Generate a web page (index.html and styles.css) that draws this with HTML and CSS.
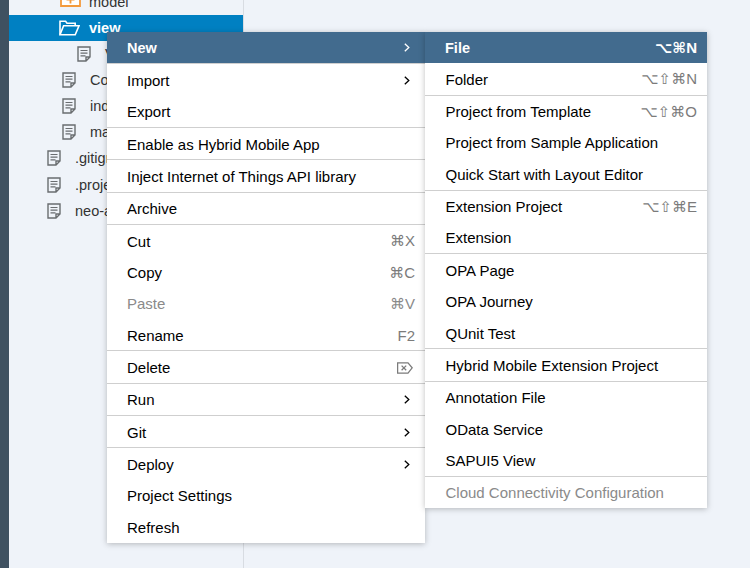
FILE: index.html
```html
<!DOCTYPE html>
<html lang="en">
<head>
    <meta charset="UTF-8">
    <meta name="viewport" content="width=device-width, initial-scale=1.0">
    <title>Workspace context menu</title>
    <link rel="stylesheet" href="styles.css">
</head>
<body>
    <svg class="icon-defs" width="0" height="0" aria-hidden="true">
        <symbol id="file-icon" viewBox="0 0 14 16">
            <path d="M1 1h12v10l-4 4H1z M13 11H9v4" fill="none" stroke="currentColor" stroke-width="1.4"/>
            <path d="M3.5 4.5h7M3.5 7.2h7M3.5 9.9h5" fill="none" stroke="currentColor" stroke-width="1.2"/>
        </symbol>
        <symbol id="chevron" viewBox="0 0 6 9">
            <path d="M.8.8 4.8 4.5.8 8.2" fill="none" stroke="currentColor" stroke-width="1.3"/>
        </symbol>
    </svg>

    <div class="app">
        <div class="rail"></div>

        <aside class="tree">
            <div class="tree-row indent-2 model-row">
                <svg class="folder-icon model" viewBox="0 0 21 14">
                    <path d="M1 1h19v12H1z" fill="#fff" stroke="#f39a3c" stroke-width="1.8"/>
                    <path d="M10.5 2.5v8M6.5 6.5h8" stroke="#f39a3c" stroke-width="1.8"/>
                </svg>
                <span>model</span>
            </div>
            <div class="tree-row indent-2 selected">
                <svg class="folder-icon" viewBox="0 0 21 16">
                    <path d="M1 14.8V1.2h5.6l1.4 2h8.2v2.6" fill="none" stroke="#fff" stroke-width="1.6"/>
                    <path d="M1 14.8 4.6 5.8H20l-3.8 9z" fill="none" stroke="#fff" stroke-width="1.6"/>
                </svg>
                <span>view</span>
            </div>
            <div class="tree-row indent-3">
                <svg class="file-icon"><use href="#file-icon"/></svg>
                <span>View1.view.xml</span>
            </div>
            <div class="tree-row indent-2">
                <svg class="file-icon"><use href="#file-icon"/></svg>
                <span>Component.js</span>
            </div>
            <div class="tree-row indent-2">
                <svg class="file-icon"><use href="#file-icon"/></svg>
                <span>index.html</span>
            </div>
            <div class="tree-row indent-2">
                <svg class="file-icon"><use href="#file-icon"/></svg>
                <span>manifest.json</span>
            </div>
            <div class="tree-row indent-1">
                <svg class="file-icon"><use href="#file-icon"/></svg>
                <span>.gitignore</span>
            </div>
            <div class="tree-row indent-1">
                <svg class="file-icon"><use href="#file-icon"/></svg>
                <span>.project.json</span>
            </div>
            <div class="tree-row indent-1">
                <svg class="file-icon"><use href="#file-icon"/></svg>
                <span>neo-app.json</span>
            </div>
        </aside>
    </div>

    <div class="menu main-menu">
        <div class="menu-item active"><span>New</span><svg class="arrow"><use href="#chevron"/></svg></div>
        <div class="menu-group">
            <div class="menu-item"><span>Import</span><svg class="arrow"><use href="#chevron"/></svg></div>
            <div class="menu-item"><span>Export</span></div>
        </div>
        <div class="menu-group">
            <div class="menu-item"><span>Enable as Hybrid Mobile App</span></div>
        </div>
        <div class="menu-group">
            <div class="menu-item"><span>Inject Internet of Things API library</span></div>
        </div>
        <div class="menu-group">
            <div class="menu-item"><span>Archive</span></div>
        </div>
        <div class="menu-group">
            <div class="menu-item"><span>Cut</span><span class="shortcut">&#8984;X</span></div>
            <div class="menu-item"><span>Copy</span><span class="shortcut">&#8984;C</span></div>
            <div class="menu-item disabled"><span>Paste</span><span class="shortcut">&#8984;V</span></div>
            <div class="menu-item"><span>Rename</span><span class="shortcut">F2</span></div>
        </div>
        <div class="menu-group">
            <div class="menu-item">
                <span>Delete</span>
                <svg class="delete-key" viewBox="0 0 16 12">
                    <path d="M.6.8h10.4l4.2 5-4.2 5.4H.6z" fill="none" stroke="#7b7b7b" stroke-width="1.3"/>
                    <path d="M4.6 3.6l4.6 4.6M9.2 3.6 4.6 8.2" fill="none" stroke="#7b7b7b" stroke-width="1.3"/>
                </svg>
            </div>
        </div>
        <div class="menu-group">
            <div class="menu-item"><span>Run</span><svg class="arrow"><use href="#chevron"/></svg></div>
        </div>
        <div class="menu-group">
            <div class="menu-item"><span>Git</span><svg class="arrow"><use href="#chevron"/></svg></div>
        </div>
        <div class="menu-group">
            <div class="menu-item"><span>Deploy</span><svg class="arrow"><use href="#chevron"/></svg></div>
            <div class="menu-item"><span>Project Settings</span></div>
            <div class="menu-item"><span>Refresh</span></div>
        </div>
    </div>

    <div class="menu sub-menu">
        <div class="menu-item active"><span>File</span><span class="shortcut">&#8997;&#8984;N</span></div>
        <div class="menu-item"><span>Folder</span><span class="shortcut">&#8997;&#8679;&#8984;N</span></div>
        <div class="menu-group">
            <div class="menu-item"><span>Project from Template</span><span class="shortcut">&#8997;&#8679;&#8984;O</span></div>
            <div class="menu-item"><span>Project from Sample Application</span></div>
            <div class="menu-item"><span>Quick Start with Layout Editor</span></div>
        </div>
        <div class="menu-group">
            <div class="menu-item"><span>Extension Project</span><span class="shortcut">&#8997;&#8679;&#8984;E</span></div>
            <div class="menu-item"><span>Extension</span></div>
        </div>
        <div class="menu-group">
            <div class="menu-item"><span>OPA Page</span></div>
            <div class="menu-item"><span>OPA Journey</span></div>
            <div class="menu-item"><span>QUnit Test</span></div>
        </div>
        <div class="menu-group">
            <div class="menu-item"><span>Hybrid Mobile Extension Project</span></div>
        </div>
        <div class="menu-group">
            <div class="menu-item"><span>Annotation File</span></div>
            <div class="menu-item"><span>OData Service</span></div>
            <div class="menu-item"><span>SAPUI5 View</span></div>
        </div>
        <div class="menu-group">
            <div class="menu-item disabled"><span>Cloud Connectivity Configuration</span></div>
        </div>
    </div>
</body>
</html>
```

FILE: styles.css
```css
html, body {
    margin: 0;
    height: 100%;
    overflow: hidden;
}

body {
    font-family: "Liberation Sans", Arial, sans-serif;
    font-size: 14px;
    color: #333;
    background-color: #eff3f9;
}

.icon-defs {
    position: absolute;
}

.app {
    display: flex;
    height: 568px;
}

.rail {
    width: 9px;
    background: #3f5161;
}

.tree {
    width: 234px;
    margin-top: -11px;
    border-right: 1px solid #d8dce2;
}

.tree-row {
    display: flex;
    align-items: center;
    height: 26.2px;
    font-size: 14.5px;
    white-space: nowrap;
    overflow: hidden;
}

.tree-row.model-row {
    height: 26px;
}

.tree-row.selected {
    height: 25.5px;
    background: #0080c2;
    color: white;
    font-weight: bold;
}

.indent-1 { padding-left: 38px; }
.indent-2 { padding-left: 53px; }
.indent-3 { padding-left: 68px; }

.file-icon {
    width: 14px;
    height: 16px;
    margin-right: 14px;
    color: #6a6d70;
    flex: none;
}

.folder-icon {
    width: 21px;
    height: 16px;
    margin: 0 9px 0 -3px;
    flex: none;
}

.folder-icon.model {
    height: 14px;
    margin: -4px 8px 0 -2px;
}

.menu {
    position: absolute;
    top: 32px;
    background: white;
    box-shadow: 0 1px 6px rgba(0, 0, 0, 0.25);
    color: #000;
    font-size: 15px;
}

.main-menu {
    left: 107px;
    width: 318px;
}

.sub-menu {
    left: 425px;
    width: 282px;
}

.menu-group {
    border-top: 1px solid #cfcfcf;
}

.menu-item {
    display: flex;
    align-items: center;
    justify-content: space-between;
    box-sizing: border-box;
    height: 31.35px;
    padding: 1px 10px 0 20px;
    white-space: nowrap;
}

.sub-menu .menu-item {
    padding: 0 10px 0 20.5px;
}

.sub-menu .menu-group .menu-item {
    padding-top: 0.5px;
}

.menu-item.active {
    padding: 0 10px 0 20px;
    background: #426b8e;
    color: white;
    font-size: 14.5px;
    font-weight: bold;
}

.active .shortcut {
    color: white;
}

.disabled,
.disabled .shortcut {
    color: #8a8a8a;
}

.shortcut {
    font-family: "Liberation Sans", "DejaVu Sans", sans-serif;
    color: #7b7b7b;
    font-size: 15px;
}

.arrow {
    width: 6px;
    height: 9px;
    margin-right: 5px;
}

.delete-key {
    width: 16px;
    height: 12px;
    margin-right: 2px;
}
```
